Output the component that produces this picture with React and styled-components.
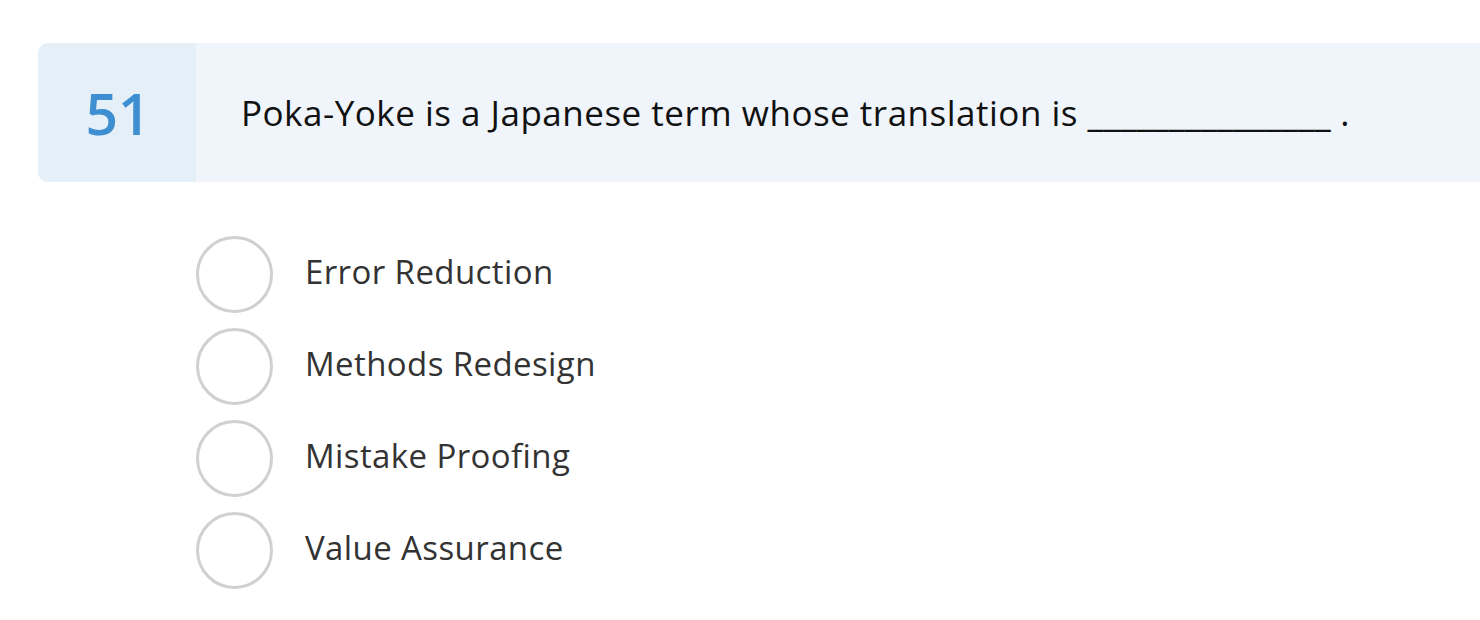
import React from 'react';
import styled, { createGlobalStyle } from 'styled-components';

const GlobalStyle = createGlobalStyle`
  body {
    margin: 0;
    background: #ffffff;
    font-family: "Open Sans", "Liberation Sans", sans-serif;
  }
`;

const Page = styled.div`
  padding-top: 43px;
  padding-left: 38px;
  overflow: hidden;
`;

const QuestionBar = styled.div`
  display: flex;
  height: 139px;
  background: #eff5fa;
  border-radius: 10px 0 0 10px;
  overflow: hidden;
  width: 1480px;
`;

const Number = styled.div`
  width: 158px;
  flex-shrink: 0;
  display: flex;
  align-items: center;
  justify-content: center;
  background: #e4eff8;
  color: #3d8fd1;
  font-size: 57px;
  font-weight: 600;
  padding-left: 2px;
  box-sizing: border-box;
`;

const QuestionText = styled.div`
  display: flex;
  align-items: center;
  padding-left: 45px;
  font-size: 35px;
  letter-spacing: 0.5px;
  color: #111111;
  white-space: nowrap;
`;

const Blank = styled.span`
  font-size: 37px;
  letter-spacing: 0;
`;

const Options = styled.ul`
  list-style: none;
  margin: 54px 0 0 158px;
  padding: 0;
  display: flex;
  flex-direction: column;
  gap: 15px;
`;

const Option = styled.li`
  display: flex;
  align-items: center;
  gap: 32px;
  height: 77px;
`;

const Radio = styled.span`
  width: 77px;
  height: 77px;
  box-sizing: border-box;
  border: 3px solid #d0d0d0;
  border-radius: 50%;
  flex-shrink: 0;
`;

const Label = styled.span`
  font-size: 33px;
  letter-spacing: 0.4px;
  color: #333333;
  padding-bottom: 6px;
`;

const answers = ['Error Reduction', 'Methods Redesign', 'Mistake Proofing', 'Value Assurance'];

const App = () => {
  return (
    <>
      <GlobalStyle />
      <Page>
        <QuestionBar>
          <Number>51</Number>
          <QuestionText>
            Poka-Yoke is a Japanese term whose translation is&nbsp;<Blank>_______________</Blank>&nbsp;.
          </QuestionText>
        </QuestionBar>
        <Options>
          {answers.map(a => (
            <Option key={a}>
              <Radio />
              <Label>{a}</Label>
            </Option>
          ))}
        </Options>
      </Page>
    </>
  );
};

export default App;
